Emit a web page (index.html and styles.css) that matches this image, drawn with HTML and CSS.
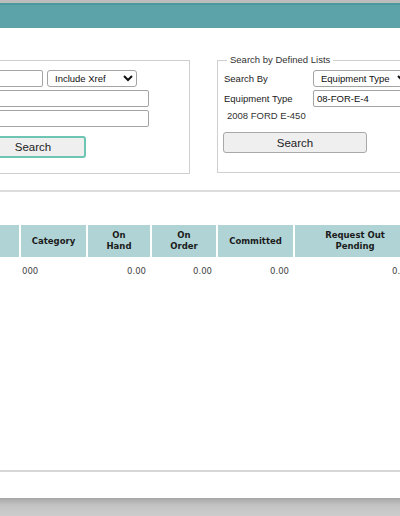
FILE: index.html
```html
<!DOCTYPE html>
<html>
<head>
<meta charset="utf-8">
<link rel="stylesheet" href="styles.css">
</head>
<body>
<div class="screen">
  <div class="chrome-top"></div>
  <div class="titlebar"></div>
  <div class="content">
    <div class="search-row">
      <fieldset class="fs fs-left">
        <div class="frow">
          <input class="in in-short" type="text">
          <select class="sel sel-xref"><option>Include Xref</option></select>
        </div>
        <div class="frow"><input class="in in-long" type="text"></div>
        <div class="frow"><input class="in in-long" type="text"></div>
        <button class="btn btn-focus">Search</button>
      </fieldset>
      <fieldset class="fs fs-right">
        <legend class="lg">Search by Defined Lists</legend>
        <div class="grid">
          <label class="lbl">Search By</label>
          <select class="sel sel-eq"><option>Equipment Type</option></select>
          <label class="lbl">Equipment Type</label>
          <input class="in in-eq" type="text" value="08-FOR-E-4">
        </div>
        <div class="desc">2008 FORD E-450</div>
        <button class="btn btn-wide">Search</button>
      </fieldset>
    </div>
    <div class="sep"></div>
    <div class="results">
      <table class="tbl">
        <colgroup>
          <col class="c0"><col class="c1"><col class="c2"><col class="c3"><col class="c4"><col class="c5">
        </colgroup>
        <thead>
          <tr>
            <th></th>
            <th>Category</th>
            <th>On<br>Hand</th>
            <th>On<br>Order</th>
            <th>Committed</th>
            <th>Request Out<br>Pending</th>
          </tr>
        </thead>
        <tbody>
          <tr>
            <td></td>
            <td class="l">000</td>
            <td class="r">0.00</td>
            <td class="r">0.00</td>
            <td class="r">0.00</td>
            <td class="r">0.00</td>
          </tr>
        </tbody>
      </table>
    </div>
    <div class="foot"></div>
  </div>
  <div class="bottom-bar"></div>
</div>
</body>
</html>
```

FILE: styles.css
```css
html, body {
  margin: 0;
  padding: 0;
  background: #ffffff;
}
body {
  width: 400px;
  height: 516px;
  overflow: hidden;
  font-family: "Liberation Sans", Arial, sans-serif;
  font-size: 9.5px;
  color: #222;
}
.screen {
  display: grid;
  grid-template-rows: 3px 25px 1fr 18px;
  width: 400px;
  height: 516px;
  overflow: hidden;
}
.chrome-top {
  background: #bdbdbd;
}
.titlebar {
  background: #5ba3a8;
  border-top: 2px solid #4b989e;
  box-sizing: border-box;
}
.content {
  display: flex;
  flex-direction: column;
  min-height: 0;
}
.search-row {
  display: flex;
  align-items: flex-start;
  gap: 27px;
  padding-top: 32px;
}
.fs {
  margin: 0;
  border: 1px solid #cfcfcf;
  box-sizing: border-box;
  min-width: 0;
}
.fs-left {
  margin-left: -110px;
  width: 300px;
  flex: none;
  padding: 9px 0 15px 10px;
}
.fs-right {
  margin-top: -6px;
  width: 210px;
  flex: none;
  padding: 4px 0 19px 6px;
}
.lg {
  padding: 0 3px;
  margin-left: 3px;
  line-height: 12px;
  font-size: 9.5px;
  color: #333;
}
.frow {
  display: flex;
  gap: 4px;
  margin-bottom: 3px;
}
.in {
  box-sizing: border-box;
  height: 17px;
  border: 1px solid #a3a3a3;
  border-radius: 2px;
  background: #fff;
  margin: 0;
  padding: 0 3px;
  font-family: "Liberation Sans", Arial, sans-serif;
  font-size: 9.5px;
  color: #111;
}
.in-short { width: 142px; }
.in-long { width: 248px; }
.in-eq { width: 96px; }
.sel {
  box-sizing: border-box;
  height: 17px;
  border: 1px solid #a3a3a3;
  border-radius: 3px;
  background: #fff;
  margin: 0;
  padding: 0 0 0 3px;
  font-family: "Liberation Sans", Arial, sans-serif;
  font-size: 9.5px;
  color: #111;
}
.sel-xref { width: 90px; }
.sel-eq { width: 98px; }
.grid {
  display: grid;
  grid-template-columns: 89px auto;
  row-gap: 3px;
  align-items: center;
}
.lbl {
  color: #222;
  line-height: 17px;
}
.desc {
  padding-left: 3px;
  margin-top: 3px;
  line-height: 12px;
  color: #333;
}
.btn {
  display: block;
  box-sizing: border-box;
  margin: 0;
  padding: 0;
  background: #efefef;
  border: 1px solid #a8a8a8;
  border-radius: 3px;
  font-family: "Liberation Sans", Arial, sans-serif;
  font-size: 11.5px;
  color: #222;
}
.btn-focus {
  margin-top: 9px;
  margin-left: 79px;
  width: 106px;
  height: 22px;
  border: 2px solid #6ec5b4;
}
.btn-wide {
  margin-top: 10px;
  margin-left: -1px;
  width: 144px;
  height: 21px;
}
.sep {
  margin-top: 16px;
  height: 2px;
  background: #dcdcdc;
  flex: none;
}
.results {
  flex: 1;
  padding-top: 33px;
  border-bottom: 2px solid #d6d6d6;
  overflow: hidden;
}
.tbl {
  margin-left: -60px;
  table-layout: fixed;
  border-collapse: collapse;
  width: 476px;
  font-family: "DejaVu Sans", Verdana, sans-serif;
  font-size: 8.5px;
}
.c0 { width: 80px; }
.c1 { width: 67px; }
.c2 { width: 64px; }
.c3 { width: 66px; }
.c4 { width: 77px; }
.c5 { width: 122px; }
.tbl th {
  background: #b0d4d6;
  border-right: 2px solid #ffffff;
  height: 32px;
  padding: 0 2px;
  line-height: 11px;
  font-weight: bold;
  color: #1b1b1b;
  text-align: center;
  vertical-align: middle;
}
.tbl td {
  padding: 9px 5px 0 3px;
  line-height: 11px;
  color: #444;
}
.tbl td.l { text-align: left; padding-left: 2px; }
.tbl td.r { text-align: right; }
.foot {
  height: 26px;
  flex: none;
}
.bottom-bar {
  background: linear-gradient(#a6a6a6, #c3c3c3 40%, #cdcdcd);
}
```
